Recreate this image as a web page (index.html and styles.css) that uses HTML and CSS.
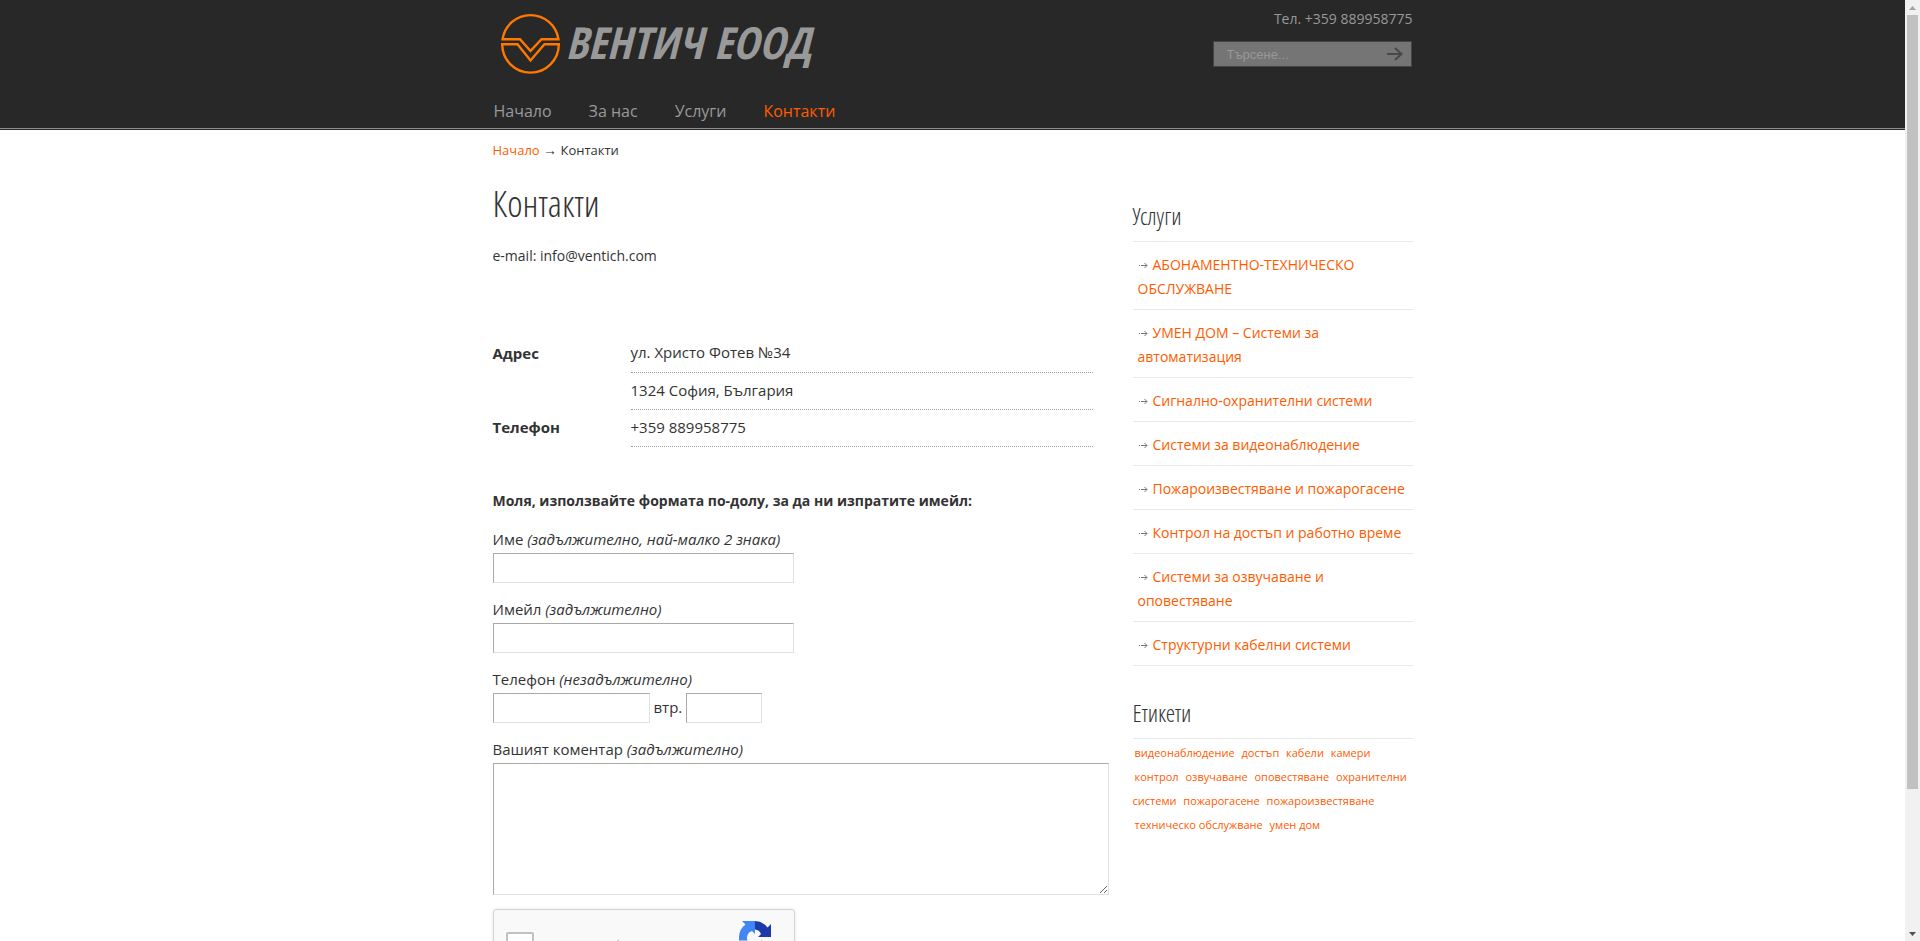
FILE: index.html
```html
<!DOCTYPE html>
<html lang="bg">
<head>
  <meta charset="UTF-8" />
  <meta name="viewport" content="width=device-width, initial-scale=1" />
  <title>Контакти - ВЕНТИЧ ЕООД</title>
  <link rel="stylesheet" href="styles.css">
</head>
<body>
  <div class="page">
    <header class="header">
      <div class="container">
        <div class="header-top">
          <a class="logo" href="#">
            <svg class="logo-mark" viewBox="0 0 60 60" fill="none" stroke="#ff7800" stroke-width="2.4">
              <path d="M2.600 25.200A28.200 28.200 0 0 1 58.400 25.200H41.500L30.500 37L20 25.200Z" />
              <path d="M2.200 30.300A28.300 28.300 0 1 0 58.800 30.300H44.500L30.500 46.500L17.500 30.300Z" />
            </svg>
            <span class="logo-text">ВЕНТИЧ ЕООД</span>
          </a>
          <div class="header-side">
            <p class="phone">Тел. +359 889958775</p>
            <form class="search">
              <input type="text" aria-label="Търсене" placeholder="Търсене..." />
              <button type="submit" aria-label="Търси">
                <svg width="18" height="16" viewBox="0 0 18 16" fill="none" stroke="#484848" stroke-width="2">
                  <path d="M1 8H16M9 2L15.500 8L9 14" />
                </svg>
              </button>
            </form>
          </div>
        </div>
        <nav class="menu">
          <a href="#">Начало</a>
          <a href="#">За нас</a>
          <a href="#">Услуги</a>
          <a class="current" href="#">Контакти</a>
        </nav>
      </div>
    </header>

    <div class="container">
      <p class="breadcrumbs"><a href="#">Начало</a> <span class="arrow">→</span> Контакти</p>

      <div class="columns">
        <main class="content">
          <h1>Контакти</h1>
          <p class="email">e-mail: info@ventich.com</p>

          <table class="address">
            <tr><th scope="row">Адрес</th><td>ул. Христо Фотев №34</td></tr>
            <tr><th></th><td>1324 София, България</td></tr>
            <tr><th scope="row">Телефон</th><td>+359 889958775</td></tr>
          </table>

          <form class="contact-form">
            <p class="intro">Моля, използвайте формата по-долу, за да ни изпратите имейл:</p>

            <div class="field">
              <label for="name">Име <em>(задължително, най-малко 2 знака)</em></label>
              <input type="text" id="name" name="name" />
            </div>

            <div class="field">
              <label for="email">Имейл <em>(задължително)</em></label>
              <input type="email" id="email" name="email" />
            </div>

            <div class="field">
              <label for="phone">Телефон <em>(незадължително)</em></label>
              <div class="phone-row">
                <input type="tel" id="phone" name="phone" />
                <label for="ext">втр.</label>
                <input type="text" id="ext" name="ext" />
              </div>
            </div>

            <div class="field">
              <label for="comment">Вашият коментар <em>(задължително)</em></label>
              <textarea id="comment" name="comment"></textarea>
            </div>

            <div class="captcha">
              <input type="checkbox" id="robot" />
              <label for="robot">Не съм робот</label>
              <svg width="32" height="32" viewBox="0 0 64 64">
                <path fill="#1c3aa9" d="M64 32V6l-7 7A32 32 0 0 0 32 0v17a14 14 0 0 1 12 9l-6 6z" />
                <path fill="#4285f4" d="M32 0H6l7 7A32 32 0 0 0 0 32v7h17a14 14 0 0 1 9-19l6 6z" />
                <path fill="#ababab" d="M0 39v21l7-7a32 32 0 0 0 50-4L45 38a14 14 0 0 1-25 2z" />
              </svg>
            </div>
          </form>
        </main>

        <aside class="sidebar">
          <h3>Услуги</h3>
          <ul class="services">
            <li><a href="#">АБОНАМЕНТНО-ТЕХНИЧЕСКО ОБСЛУЖВАНЕ</a></li>
            <li><a href="#">УМЕН ДОМ – Системи за автоматизация</a></li>
            <li><a href="#">Сигнално-охранителни системи</a></li>
            <li><a href="#">Системи за видеонаблюдение</a></li>
            <li><a href="#">Пожароизвестяване и пожарогасене</a></li>
            <li><a href="#">Контрол на достъп и работно време</a></li>
            <li><a href="#">Системи за озвучаване и оповестяване</a></li>
            <li><a href="#">Структурни кабелни системи</a></li>
          </ul>

          <h3>Етикети</h3>
          <div class="tags">
            <a href="#">видеонаблюдение</a>
            <a href="#">достъп</a>
            <a href="#">кабели</a>
            <a href="#">камери</a>
            <a href="#">контрол</a>
            <a href="#">озвучаване</a>
            <a href="#">оповестяване</a>
            <a href="#">охранителни системи</a>
            <a href="#">пожарогасене</a>
            <a href="#">пожароизвестяване</a>
            <a href="#">техническо обслужване</a>
            <a href="#">умен дом</a>
          </div>
        </aside>
      </div>
    </div>
  </div>

  <div class="scrollbar">
    <svg width="15" height="15"><path fill="#a3a3a3" d="M4 10h7L7.500 6z" /></svg>
    <div class="scroll-track"><div class="scroll-thumb"></div></div>
    <svg width="15" height="15"><path fill="#505050" d="M4 6h7L7.500 10z" /></svg>
  </div>
</body>
</html>
```
FILE: styles.css
```css
* {
  box-sizing: border-box;
}

body {
  display: flex;
  height: 100vh;
  margin: 0;
  overflow: hidden;
  font-family: "Open Sans", sans-serif;
  font-size: 14px;
  line-height: 24px;
  color: #333;
  background: #fff;
}

a {
  color: #ff5c00;
  text-decoration: none;
}

p,
h1,
h3,
ul {
  margin: 0;
  padding: 0;
  font-weight: normal;
}

.page {
  flex: 1;
  overflow: hidden;
}

.container {
  max-width: 920px;
  margin: 0 auto;
}

/* header */
.header {
  background: #282828;
  border-bottom: 1px solid #8f8f8f;
  box-shadow: 0 1px 0 #282828;
  color: #999;
}

.header-top {
  display: flex;
  justify-content: space-between;
  height: 94px;
}

.logo {
  display: flex;
  gap: 6px;
  padding: 14px 0 0 7px;
  color: #999;
}

.logo-mark {
  width: 60px;
  height: 60px;
  overflow: visible;
}

.logo-text {
  font-family: "Open Sans Condensed", "Open Sans", sans-serif;
  font-size: 44px;
  font-weight: bold;
  font-style: italic;
  line-height: 56px;
  white-space: nowrap;
}

.header-side {
  padding-top: 7px;
  text-align: right;
}

.search {
  display: flex;
  width: 199px;
  height: 26px;
  margin: 10px 1px 0 0;
  background: #757575;
  border: 1px solid #444;
}

.search input {
  flex: 1;
  min-width: 0;
  padding: 0 0 0 13px;
  border: 0;
  background: none;
  font-family: "Liberation Sans", sans-serif;
  font-size: 13px;
}

.search input::placeholder {
  color: #999;
}

.search button {
  display: flex;
  align-items: center;
  padding: 0 7px;
  border: 0;
  background: none;
}

.menu {
  display: flex;
  gap: 37px;
  padding: 5px 1px;
  font-size: 16px;
}

.menu a {
  color: #999;
}

.menu .current {
  color: #ff5c00;
}

/* content */
.breadcrumbs {
  padding-top: 9px;
  font-size: 13px;
}

.breadcrumbs .arrow {
  font-family: "Liberation Sans", sans-serif;
  font-size: 14px;
  line-height: 1;
}

.columns {
  display: flex;
  justify-content: space-between;
}

.content {
  width: 616px;
}

h1,
h3 {
  font-family: "Open Sans Condensed Light", "Open Sans Condensed", "Open Sans", sans-serif;
  font-weight: 300;
}

h1 {
  padding-top: 17px;
  font-size: 37px;
  line-height: 48px;
}

.email {
  padding-top: 17px;
}

.address {
  width: 600px;
  margin-top: 67px;
  border-collapse: collapse;
  font-size: 15px;
}

.address th {
  width: 138px;
  padding: 0 0 2px;
  text-align: left;
}

.address td {
  height: 37px;
  padding: 0 0 2px;
  border-bottom: 1px dotted #999;
}

.intro {
  padding-top: 42px;
  font-weight: bold;
}

.field {
  padding-top: 14px;
  font-size: 15px;
}

.field label {
  display: block;
  padding-bottom: 2px;
}

.field input,
.field textarea {
  display: block;
  width: 301px;
  height: 30px;
  padding: 4px;
  border: 1px solid #e0e0e0;
  border-top-color: #aaa;
  border-left-color: #aaa;
  background: #fff;
}

.field textarea {
  width: 100%;
  height: 132px;
}

.phone-row {
  display: flex;
  align-items: center;
  gap: 4px;
}

.phone-row #phone {
  width: 157px;
}

.phone-row #ext {
  width: 76px;
}

.captcha {
  display: flex;
  width: 302px;
  height: 78px;
  margin-top: 14px;
  padding: 11px 23px 0 12px;
  border: 1px solid #d3d3d3;
  border-radius: 3px;
  background: #f9f9f9;
  box-shadow: 0 0 4px rgba(0,0,0,0.08);
  font-family: Roboto, sans-serif;
}

.captcha input {
  width: 28px;
  height: 28px;
  margin: 11px 12px 0 0;
  border: 2px solid #c1c1c1;
  border-radius: 2px;
  background: #fff;
  appearance: none;
}

.captcha label {
  flex: 1;
  padding-top: 14px;
}

/* sidebar */
.sidebar {
  width: 280px;
  padding-top: 37px;
}

h3 {
  padding-bottom: 8px;
  border-bottom: 1px solid #e8e8e8;
  font-size: 24px;
  line-height: 34px;
}

.services {
  margin-bottom: 30px;
  list-style: none;
}

.services li {
  padding: 11px 5px 8px;
  border-bottom: 1px solid #e8e8e8;
}

.services li::before {
  content: "";
  display: inline-block;
  width: 15px;
  height: 8px;
  background: url("data:image/svg+xml,%3Csvg xmlns='http://www.w3.org/2000/svg' width='15' height='7' fill='none' stroke='%23777'%3E%3Cpath d='M1 3.500h1M3 3.500h6M6.500 1l2.500 2.500l-2.500 2.500'/%3E%3C/svg%3E") no-repeat;
}

.tags {
  padding-top: 2px;
  font-size: 11px;
}

.tags a {
  padding: 0 2px;
}

/* scrollbar */
.scrollbar {
  display: flex;
  flex-direction: column;
  width: 15px;
  background: #f1f1f1;
}

.scroll-track {
  flex: 1;
  padding: 0 2px;
}

.scroll-thumb {
  height: 85%;
  background: #c1c1c1;
}
```
